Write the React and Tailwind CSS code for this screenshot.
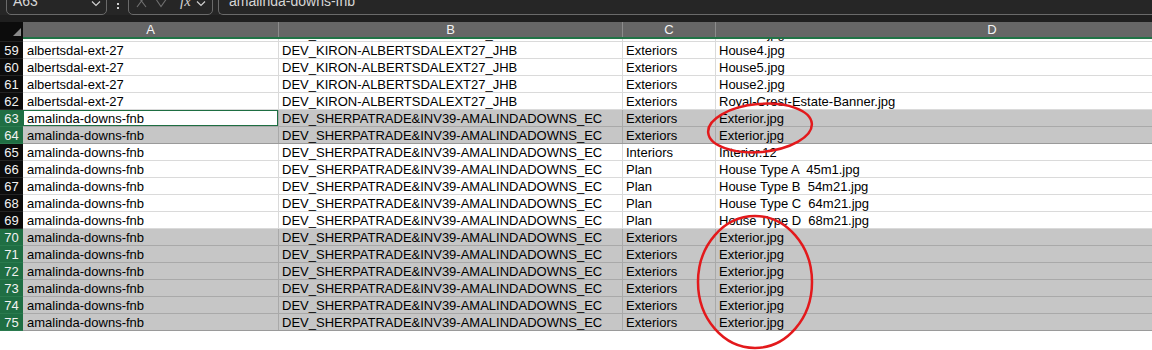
const KIRON = "DEV_KIRON-ALBERTSDALEXT27_JHB";
const SHERPA = "DEV_SHERPATRADE&INV39-AMALINDADOWNS_EC";

const rows = [
  { n: 59, a: "albertsdal-ext-27", b: KIRON, c: "Exteriors", d: "House4.jpg" },
  { n: 60, a: "albertsdal-ext-27", b: KIRON, c: "Exteriors", d: "House5.jpg" },
  { n: 61, a: "albertsdal-ext-27", b: KIRON, c: "Exteriors", d: "House2.jpg" },
  { n: 62, a: "albertsdal-ext-27", b: KIRON, c: "Exteriors", d: "Royal-Crest-Estate-Banner.jpg" },
  { n: 63, a: "amalinda-downs-fnb", b: SHERPA, c: "Exteriors", d: "Exterior.jpg", sel: true, active: true },
  { n: 64, a: "amalinda-downs-fnb", b: SHERPA, c: "Exteriors", d: "Exterior.jpg", sel: true, last: true },
  { n: 65, a: "amalinda-downs-fnb", b: SHERPA, c: "Interiors", d: "Interior.12" },
  { n: 66, a: "amalinda-downs-fnb", b: SHERPA, c: "Plan", d: "House Type A  45m1.jpg" },
  { n: 67, a: "amalinda-downs-fnb", b: SHERPA, c: "Plan", d: "House Type B  54m21.jpg" },
  { n: 68, a: "amalinda-downs-fnb", b: SHERPA, c: "Plan", d: "House Type C  64m21.jpg" },
  { n: 69, a: "amalinda-downs-fnb", b: SHERPA, c: "Plan", d: "House Type D  68m21.jpg" },
  { n: 70, a: "amalinda-downs-fnb", b: SHERPA, c: "Exteriors", d: "Exterior.jpg", sel: true },
  { n: 71, a: "amalinda-downs-fnb", b: SHERPA, c: "Exteriors", d: "Exterior.jpg", sel: true },
  { n: 72, a: "amalinda-downs-fnb", b: SHERPA, c: "Exteriors", d: "Exterior.jpg", sel: true },
  { n: 73, a: "amalinda-downs-fnb", b: SHERPA, c: "Exteriors", d: "Exterior.jpg", sel: true },
  { n: 74, a: "amalinda-downs-fnb", b: SHERPA, c: "Exteriors", d: "Exterior.jpg", sel: true },
  { n: 75, a: "amalinda-downs-fnb", b: SHERPA, c: "Exteriors", d: "Exterior.jpg", sel: true, last: true },
];

const Chevron = ({ className }) => (
  <svg className={className} width="10" height="6" viewBox="0 0 10 6" fill="none">
    <path d="M1 0.5 L5 4.5 L9 0.5" stroke="currentColor" strokeWidth="1.2" />
  </svg>
);

const Row = ({ r }) => {
  const cell = r.sel
    ? "bg-[#c6c6c6] border-r border-[#a9a9a9]"
    : "bg-white border-r border-[#dadada]";
  const line = r.sel
    ? r.last
      ? "border-b border-[#9a9a9a]"
      : "border-b border-[#a9a9a9]"
    : "border-b border-[#dadada]";
  return (
    <div className="flex h-[17px] leading-[16px] text-[13px] text-black">
      <div
        className={
          "w-[23px] shrink-0 pt-[1px] leading-[15px] text-center text-[#f2f2f2] border-b " +
          (r.sel ? "bg-[#1f6e43] border-[#2a7a4e]" : "bg-[#0c0c0c] border-[#242424]")
        }
      >
        {r.n}
      </div>
      <div className={"flex flex-1 leading-[15px] " + line}>
        <div
          className={
            "w-[256px] shrink-0 pl-[4px] pt-[1px] " +
            (r.active ? "bg-white shadow-[inset_0_0_0_1px_#1e6e42] border-r border-[#a9a9a9]" : cell)
          }
        >
          {r.a}
        </div>
        <div className={"w-[344px] shrink-0 pl-[3px] pt-[1px] " + cell}>{r.b}</div>
        <div className={"w-[93px] shrink-0 pl-[3px] pt-[1px] " + cell}>{r.c}</div>
        <div className={"flex-1 pl-[3px] pt-[1px] whitespace-pre " + (r.sel ? "bg-[#c6c6c6]" : "bg-white")}>{r.d}</div>
      </div>
    </div>
  );
};

export default function App() {
  return (
    <div className="relative w-[1152px] h-[350px] overflow-hidden bg-white font-['Liberation_Sans',Arial,sans-serif]">
      {/* formula bar, only its lower part is visible */}
      <div className="flex items-end h-[15px] bg-[#262626] overflow-hidden pl-[6px] text-[14px] leading-[16px] text-[#d6d6d6]">
        <div className="flex items-end justify-between w-[101px] h-[30px] shrink-0 border border-[#6a6a6a] rounded-[5px] pl-[6px] pr-[5px] pb-[5px]">
          <span>A63</span>
          <Chevron className="mb-[2px] text-[#cfcfcf]" />
        </div>
        <div className="w-[21px] shrink-0 flex flex-col items-center gap-[2px] pb-[6px]">
          <span className="w-[2px] h-[2px] bg-[#cfcfcf]" />
          <span className="w-[2px] h-[2px] bg-[#cfcfcf]" />
        </div>
        <div className="flex items-end w-[85px] h-[30px] shrink-0 border border-[#6a6a6a] rounded-[5px] pl-[7px] pb-[5px] gap-[9px]">
          <svg width="11" height="10" viewBox="0 0 11 10" className="mb-[1px]">
            <path d="M1 -3 L10 9 M10 -3 L1 9" stroke="#6f6f6f" strokeWidth="1.1" />
          </svg>
          <svg width="13" height="8" viewBox="0 0 13 8" className="mb-[1px]">
            <path d="M0.5 0 L5 6.5 L12.5 -4" stroke="#6f6f6f" strokeWidth="1.1" fill="none" />
          </svg>
          <span className="italic font-['Liberation_Serif',serif] text-[15px] text-[#d0d0d0] ml-[2px]">fx</span>
          <Chevron className="mb-[2px] -ml-[4px] text-[#cfcfcf]" />
        </div>
        <div className="flex items-end flex-1 h-[30px] ml-[5px] border-l border-b border-t border-[#6a6a6a] rounded-l-[5px] pl-[10px] pb-[5px]">
          amalinda-downs-fnb
        </div>
      </div>
      <div className="h-[7px] bg-[#1f1f1f]" />

      {/* column headers */}
      <div className="flex">
        <div className="w-[23px] h-[17px] shrink-0 bg-[#0c0c0c] flex items-end justify-end pr-[2px] pb-[3px]">
          <div className="w-0 h-0 border-l-[8px] border-l-transparent border-b-[8px] border-b-[#8a8a8a]" />
        </div>
        <div className="flex-1 flex flex-col">
          <div className="flex h-[15px] bg-[#666666] text-[13px] leading-[15px] text-[#f4f4f4]">
            <div className="w-[256px] shrink-0 text-center border-r border-[#8c8c8c]">A</div>
            <div className="w-[344px] shrink-0 text-center border-r border-[#8c8c8c]">B</div>
            <div className="w-[93px] shrink-0 text-center border-r border-[#8c8c8c]">C</div>
            <div className="w-[552px] shrink-0 text-center">D</div>
          </div>
          <div className="h-[2px] bg-[#217346]" />
        </div>
      </div>

      {/* row 58, scrolled mostly out of view */}
      <div className="h-[3px] overflow-hidden">
        <div className="-mt-[14px]">
          <Row r={{ n: 58, a: "albertsdal-ext-27", b: KIRON, c: "Exteriors", d: "House3.jpg" }} />
        </div>
      </div>

      {rows.map((r) => (
        <Row key={r.n} r={r} />
      ))}

      {/* red annotation circles */}
      <svg className="absolute left-0 top-0 pointer-events-none" width="1152" height="350">
        <ellipse cx="760" cy="128" rx="52" ry="24" transform="rotate(-5 760 128)" fill="none" stroke="#e3191c" strokeWidth="2.5" />
        <ellipse cx="755" cy="282" rx="57" ry="66" fill="none" stroke="#e3191c" strokeWidth="2.5" />
      </svg>
    </div>
  );
}
